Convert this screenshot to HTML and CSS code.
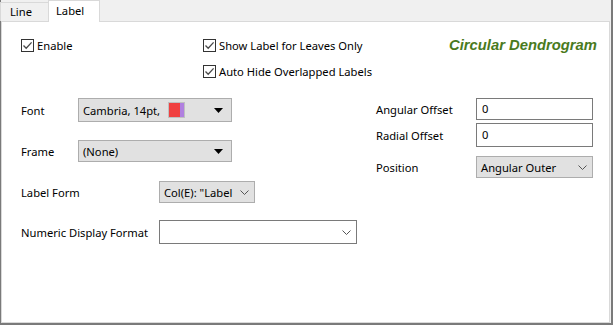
FILE: index.html
```html
<!DOCTYPE html>
<html>
<head>
<meta charset="utf-8">
<link rel="stylesheet" href="styles.css">
</head>
<body>
<div class="window">
  <div class="tabs">
    <div class="tab">Line</div>
    <div class="tab active">Label</div>
  </div>
  <div class="panel">
    <div class="top">
      <label class="check enable"><span class="box"><svg width="11" height="11" viewBox="0 0 11 11"><path d="M1.5 5.5 L4.2 8.3 L9.6 2.4" fill="none" stroke="#4a4a4a" stroke-width="1.3"/></svg></span>Enable</label>
      <div class="checks">
        <label class="check"><span class="box"><svg width="11" height="11" viewBox="0 0 11 11"><path d="M1.5 5.5 L4.2 8.3 L9.6 2.4" fill="none" stroke="#4a4a4a" stroke-width="1.3"/></svg></span>Show Label for Leaves Only</label>
        <label class="check"><span class="box"><svg width="11" height="11" viewBox="0 0 11 11"><path d="M1.5 5.5 L4.2 8.3 L9.6 2.4" fill="none" stroke="#4a4a4a" stroke-width="1.3"/></svg></span>Auto Hide Overlapped Labels</label>
      </div>
      <div class="title">Circular Dendrogram</div>
    </div>
    <div class="body">
      <div class="leftcol">
        <div class="row r-font">
          <span class="lbl w-short">Font</span>
          <div class="combo flat w-font">
            <span class="val">Cambria, 14pt,</span>
            <span class="swatch"><span class="red"></span><span class="purple"></span></span>
            <span class="spacer"></span>
            <svg class="tri" width="9" height="5" viewBox="0 0 9 5"><path d="M0 0 H9 L4.5 5 Z" fill="#000"/></svg>
          </div>
        </div>
        <div class="row r-frame">
          <span class="lbl w-short">Frame</span>
          <div class="combo flat w-font h22">
            <span class="val">(None)</span>
            <span class="spacer"></span>
            <svg class="tri" width="9" height="5" viewBox="0 0 9 5"><path d="M0 0 H9 L4.5 5 Z" fill="#000"/></svg>
          </div>
        </div>
        <div class="row r-form">
          <span class="lbl w-long">Label Form</span>
          <div class="combo gray w-form">
            <span class="val">Col(E): "Label</span>
            <span class="spacer"></span>
            <svg class="chev" width="9" height="5" viewBox="0 0 9 5"><path d="M0.5 0.5 L4.5 4.5 L8.5 0.5" fill="none" stroke="#555" stroke-width="1"/></svg>
          </div>
        </div>
        <div class="row r-num">
          <span class="lbl w-long">Numeric Display Format</span>
          <div class="combo white w-num">
            <span class="spacer"></span>
            <svg class="chev" width="9" height="5" viewBox="0 0 9 5"><path d="M0.5 0.5 L4.5 4.5 L8.5 0.5" fill="none" stroke="#555" stroke-width="1"/></svg>
          </div>
        </div>
      </div>
      <div class="rightcol">
        <div class="row r-ang">
          <span class="lbl w-right">Angular Offset</span>
          <div class="input">0</div>
        </div>
        <div class="row r-rad">
          <span class="lbl w-right">Radial Offset</span>
          <div class="input tall">0</div>
        </div>
        <div class="row r-pos">
          <span class="lbl w-right">Position</span>
          <div class="combo gray w-pos">
            <span class="val">Angular Outer</span>
            <span class="spacer"></span>
            <svg class="chev" width="9" height="5" viewBox="0 0 9 5"><path d="M0.5 0.5 L4.5 4.5 L8.5 0.5" fill="none" stroke="#555" stroke-width="1"/></svg>
          </div>
        </div>
      </div>
    </div>
  </div>
</div>
</body>
</html>
```

FILE: styles.css
```css
* { box-sizing: border-box; }
html, body { margin: 0; padding: 0; background: #f0f0f0; }
body {
  font-family: "Noto Sans", "Segoe UI", sans-serif;
  font-size: 11.2px;
  color: #000;
}
.window {
  width: 613px;
  height: 325px;
  border-left: 1px solid #7a7a7a;
  border-right: 2px solid #7a7a7a;
  border-bottom: 2px solid #7a7a7a;
  background: #f0f0f0;
  display: flex;
  flex-direction: column;
}
.tabs {
  height: 21px;
  display: flex;
  align-items: flex-end;
  position: relative;
  z-index: 1;
}
.tab {
  height: 19px;
  width: 49px;
  border: 1px solid #d9d9d9;
  border-bottom: none;
  background: #f0f0f0;
  padding-left: 9px;
  line-height: 18px;
  margin-left: -1px;
}
.tab.active {
  height: 22px;
  width: 52px;
  background: #fff;
  margin-bottom: -1px;
  padding-left: 7px;
  line-height: 20px;
  margin-left: -1px;
}
.panel {
  flex: 1;
  margin-right: 1px;
  background: #fff;
  border: 1px solid #d9d9d9;
  padding: 0 0 0 19px;
}
.top {
  display: flex;
  align-items: flex-start;
  padding-top: 15px;
  height: 75px;
}
.check {
  display: flex;
  align-items: center;
  height: 16px;
  white-space: nowrap;
}
.box {
  width: 13px;
  height: 13px;
  border: 1px solid #333;
  background: #fff;
  display: inline-flex;
  align-items: center;
  justify-content: center;
  margin-right: 3px;
  flex: none;
}
.enable { width: 182px; }
.checks {
  display: flex;
  flex-direction: column;
  gap: 10px;
  width: 246px;
}
.title {
  font-family: "Liberation Sans", Arial, sans-serif;
  font-weight: bold;
  font-style: italic;
  font-size: 14.8px;
  color: #4a7a1e;
  margin-top: 0;
}
.body {
  display: flex;
}
.leftcol { width: 355px; }
.rightcol { padding-top: 1px; }
.row {
  display: flex;
  align-items: center;
}
.lbl { flex: none; white-space: nowrap; }
.w-short { width: 57px; }
.w-long { width: 138px; }
.w-right { width: 100px; }
.r-font { height: 24px; margin-top: 1px; }
.r-frame { margin-top: 18px; }
.r-form { margin-top: 19px; }
.r-num { margin-top: 17px; }
.combo {
  display: flex;
  align-items: center;
  height: 23px;
  padding: 0 8px 0 4px;
  border: 1px solid #adadad;
}
.combo.flat { background: #e1e1e1; height: 24px; }
.combo.h22 { height: 22px; }
.combo.gray { background: #e1e1e1; height: 22px; }
.combo.white { background: #fff; border-color: #7a7a7a; height: 24px; }
.w-font { width: 154px; }
.w-form { width: 96px; padding-right: 5px; }
.w-num { width: 198px; padding-right: 5px; }
.w-pos { width: 117px; padding-right: 5px; }
.spacer { flex: 1; }
.swatch {
  display: inline-flex;
  margin-left: 8px;
  height: 16px;
  border: 1px solid #c0c0c0;
}
.swatch .red { width: 11px; background: #f04040; }
.swatch .purple { width: 4px; background: #b080e0; }
.input {
  width: 117px;
  height: 22px;
  border: 1px solid #7a7a7a;
  background: #fff;
  padding-left: 5px;
  line-height: 20px;
}
.input.tall { height: 24px; line-height: 22px; }
.r-rad { margin-top: 3px; }
.r-pos { margin-top: 9px; }
```
